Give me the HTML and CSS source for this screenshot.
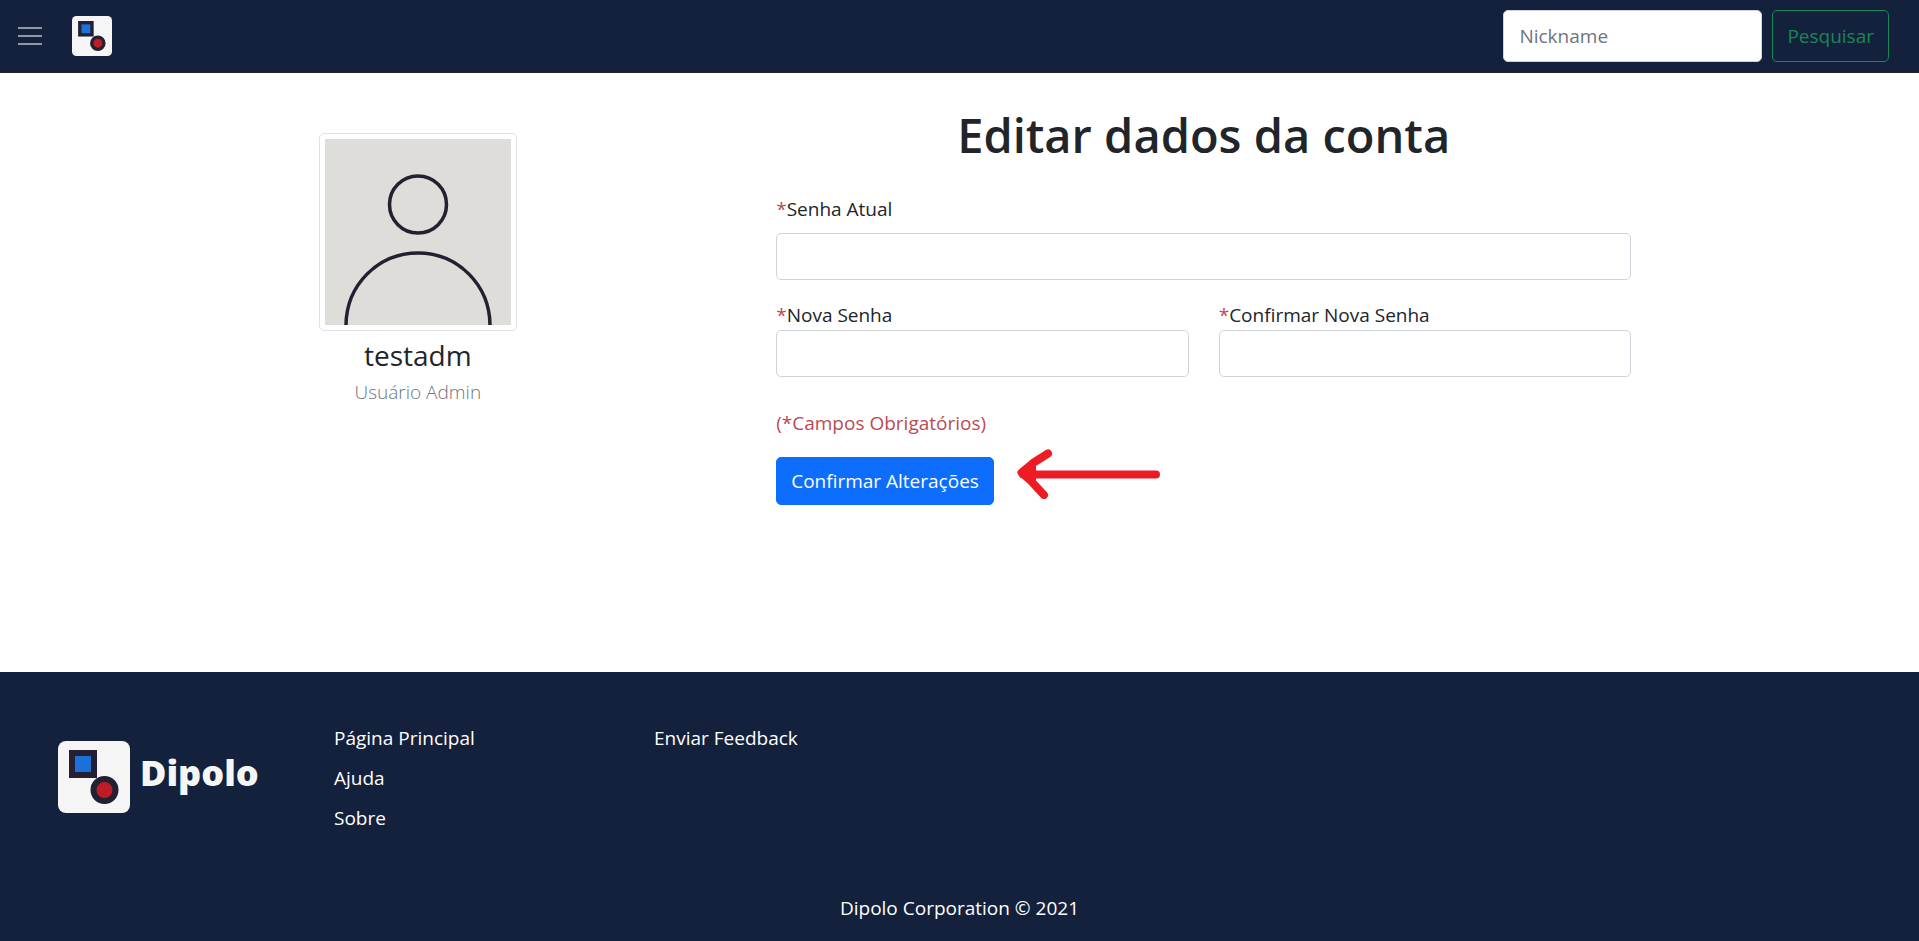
FILE: index.html
```html
<!DOCTYPE html>
<html lang="pt-BR">
<head>
<meta charset="utf-8">
<meta name="viewport" content="width=device-width, initial-scale=1">
<title>Dipolo</title>
<link rel="stylesheet" href="styles.css">
</head>
<body>
<svg class="sprite" aria-hidden="true">
  <symbol id="logo" viewBox="0 0 72 72">
    <rect width="72" height="72" rx="8" fill="#f6f5f5"/>
    <rect x="14" y="12" width="22" height="22" fill="#1c71d8" stroke="#241f31" stroke-width="6"/>
    <circle cx="46.500" cy="49" r="11" fill="#c01c28" stroke="#241f31" stroke-width="6"/>
  </symbol>
</svg>
<header class="navbar">
  <button class="menu" type="button" aria-label="Menu">
    <svg viewBox="0 0 24 24" stroke="currentColor" stroke-width="2"><path d="M0 4h24M0 12h24M0 20h24"/></svg>
  </button>
  <a class="brand" href="#" aria-label="Dipolo"><svg><use href="#logo"/></svg></a>
  <form class="search">
    <input class="control search-input" type="search" placeholder="Nickname" aria-label="Nickname">
    <button class="btn btn-outline" type="button">Pesquisar</button>
  </form>
</header>
<main class="content">
  <aside class="profile">
    <div class="thumbnail">
      <svg viewBox="0 0 186 186" fill="none" stroke="#241f31" stroke-width="3.500" role="img" aria-label="Foto de perfil">
        <rect width="186" height="186" fill="#deddda" stroke="none"/>
        <circle cx="93" cy="65.500" r="28.500"/>
        <path d="M21 187C21 146 53 114 93 114S165 146 165 187"/>
      </svg>
    </div>
    <h2 class="username">testadm</h2>
    <p class="role">Usuário Admin</p>
  </aside>
  <section class="account">
    <h1 class="title">Editar dados da conta</h1>
    <form class="account-form">
      <div class="field field-spaced">
        <label for="current"><span class="required">*</span>Senha Atual</label>
        <input class="control" id="current" type="password">
      </div>
      <div class="row">
        <div class="field">
          <label for="new"><span class="required">*</span>Nova Senha</label>
          <input class="control" id="new" type="password">
        </div>
        <div class="field">
          <label for="confirm"><span class="required">*</span>Confirmar Nova Senha</label>
          <input class="control" id="confirm" type="password">
        </div>
      </div>
      <p class="note required">(*Campos Obrigatórios)</p>
      <div class="actions">
        <button class="btn btn-primary" type="button">Confirmar Alterações</button>
        <svg class="arrow" viewBox="0 0 144 50" fill="none" stroke="#ed1c24" stroke-width="8" stroke-linecap="round" stroke-linejoin="round" aria-hidden="true"><path d="M139 25.500H6M31 4.500L16 14L4.500 23.500L14 32L27 46"/><path d="M5 23L18 15V33Z" stroke-width="2" fill="#ed1c24"/></svg>
      </div>
    </form>
  </section>
</main>
<footer class="footer">
  <div class="footer-columns">
    <a class="footer-brand" href="#"><svg><use href="#logo"/></svg><span class="wordmark">Dipolo</span></a>
    <nav class="links">
      <a href="#">Página Principal</a>
      <a href="#">Ajuda</a>
      <a href="#">Sobre</a>
    </nav>
    <nav class="links">
      <a href="#">Enviar Feedback</a>
    </nav>
  </div>
  <p class="copyright">Dipolo Corporation © 2021</p>
</footer>
</body>
</html>
```
FILE: styles.css
```css
* { box-sizing: border-box; }

body {
  margin: 0;
  min-height: 100vh;
  display: flex;
  flex-direction: column;
  background: #fff;
  color: #212529;
  font: 19px/30px "Open Sans", "Noto Sans", sans-serif;
}

h1, h2, p { margin: 0; }
a { color: inherit; text-decoration: none; }
input, button { font: inherit; }
svg { display: block; }
.sprite { position: absolute; width: 0; height: 0; }

.navbar {
  display: flex;
  align-items: center;
  padding: 10px 30px 10px 18px;
  background: #14213d;
  border-bottom: 1px solid #212529;
}
.menu {
  padding: 0;
  border: 0;
  background: none;
  color: #9097a5;
}
.menu svg { width: 24px; height: 24px; }
.brand { margin-left: 30px; }
.brand svg { width: 40px; height: 40px; }
.search {
  display: flex;
  gap: 10px;
  margin-left: auto;
}

.control {
  width: 100%;
  height: 47px;
  padding: 8px 15px;
  border: 1px solid #ced4da;
  border-radius: 5px;
  background: #fff;
  color: #212529;
}
.control::placeholder { color: #6c757d; opacity: 1; }
.search-input { width: 259px; height: 52px; }

.btn {
  padding: 8px 14px;
  border: 1px solid transparent;
  border-radius: 5px;
  white-space: nowrap;
}
.btn-outline { border-color: #198754; background: none; color: #198754; }
.btn-primary { border-color: #0d6efd; background: #0d6efd; color: #fff; }

.content {
  flex: 1;
  display: grid;
  grid-template-columns: 260fr 855fr;
  column-gap: 17%;
  align-items: start;
  padding: 30px 15% 60px;
}
.profile { padding-top: 30px; text-align: center; }
.thumbnail {
  width: 198px;
  margin: 0 auto;
  padding: 5px;
  border: 1px solid #dee2e6;
  border-radius: 5px;
}
.username {
  margin-top: 6px;
  font-size: 28px;
  font-weight: 400;
  line-height: 36px;
}
.role { margin-top: 4px; color: #6c757d; font-weight: 300; }

.title {
  padding-top: 2px;
  font-size: 47px;
  font-weight: 600;
  line-height: 60px;
  text-align: center;
}
.account-form { margin-top: 29px; }
.field { display: flex; flex-direction: column; }
.field-spaced { gap: 9px; }
.row {
  display: grid;
  grid-template-columns: 1fr 1fr;
  gap: 30px;
  margin-top: 20px;
}
.required { color: #bb4a50; }
.note { margin-top: 31px; }
.actions { position: relative; margin-top: 19px; }
.arrow {
  position: absolute;
  left: 241px;
  top: -8px;
  width: 144px;
  height: 50px;
}

.footer {
  padding: 50px 58px 18px;
  background: #14213d;
  color: #fff;
}
.footer-columns { display: flex; }
.footer-brand {
  display: flex;
  align-items: center;
  align-self: flex-start;
  gap: 10px;
  width: 276px;
  padding-top: 19px;
  color: #f6f5f5;
}
.footer-brand svg { width: 72px; height: 72px; }
.wordmark {
  padding-bottom: 8px;
  font: 900 36px/50px "Noto Sans", "Open Sans", sans-serif;
}
.links {
  display: flex;
  flex-direction: column;
  width: 320px;
}
.links a { padding: 5px 0; }
.links a:first-child { padding-top: 1px; }
.copyright { margin-top: 55px; text-align: center; }
```
